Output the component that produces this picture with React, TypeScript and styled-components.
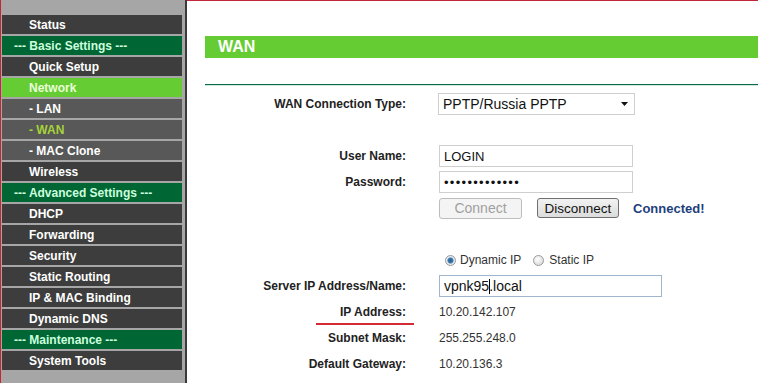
import styled, { createGlobalStyle } from 'styled-components';

const GlobalStyle = createGlobalStyle`
    html, body {
        margin: 0;
        padding: 0;
        background: #ffffff;
        font-family: 'Liberation Sans', Arial, sans-serif;
    }
    body {
        width: 758px;
        height: 383px;
        overflow: hidden;
    }
`;

const Page = styled.div`
    display: flex;
    width: 758px;
    height: 383px;
    overflow: hidden;
`;

const Sidebar = styled.nav`
    width: 180px;
    flex-shrink: 0;
    padding: 15px 3px 0 1px;
    background: #a6a6a6;
    border-left: 1px solid #c8262f;
    border-right: 2px solid #3a3a3a;
    display: flex;
    flex-direction: column;
    gap: 2px;
`;

type MenuKind = 'item' | 'sub' | 'heading' | 'active' | 'current';

const menuBg: Record<MenuKind, string> = {
    item: '#3d3d3d',
    sub: '#585858',
    heading: '#006633',
    active: '#66cc33',
    current: '#585858',
};

const menuColor: Record<MenuKind, string> = {
    item: '#ffffff',
    sub: '#ffffff',
    heading: '#ccffdd',
    active: '#eaffd8',
    current: '#a6d23a',
};

const MenuRow = styled.div<{ $kind: MenuKind }>`
    height: 19px;
    display: flex;
    align-items: center;
    padding-left: ${({ $kind }) => ($kind === 'heading' ? '12px' : '27px')};
    background: ${({ $kind }) => menuBg[$kind]};
    color: ${({ $kind }) => menuColor[$kind]};
    font-size: 12px;
    font-weight: bold;
    white-space: nowrap;
`;

const Main = styled.main`
    flex: 1;
    border-top: 1px solid #c0283a;
    padding-left: 18px;
    display: flex;
    flex-direction: column;
`;

const TitleBar = styled.div`
    margin-top: 35px;
    height: 22px;
    background: #66cc33;
    color: #ffffff;
    font-size: 16px;
    font-weight: bold;
    display: flex;
    align-items: center;
    padding-left: 13px;
`;

const Divider = styled.div`
    margin-top: 26px;
    height: 1px;
    background: #0b6a4a;
    box-shadow: 0 1px 0 #cfe8da;
`;

const Form = styled.div`
    margin-top: 6px;
    display: grid;
    grid-template-columns: 201px 1fr;
    grid-auto-rows: 26px;
    column-gap: 33px;
    align-items: center;
`;

const Label = styled.div`
    position: relative;
    text-align: right;
    font-size: 12px;
    font-weight: bold;
    color: #222222;
    height: 26px;
    line-height: 26px;
`;

const Underline = styled.span`
    position: absolute;
    left: 111px;
    bottom: 0;
    width: 98px;
    height: 2px;
    background: #d42a35;
`;

const Value = styled.div`
    font-size: 12px;
    color: #333333;
    display: flex;
    align-items: center;
`;

const TextBox = styled.div<{ $width: number; $size?: number; $focus?: boolean }>`
    box-sizing: border-box;
    width: ${({ $width }) => $width}px;
    height: 22px;
    border: 1px solid ${({ $focus }) => ($focus ? '#9fb6cc' : '#cfcfcf')};
    background: #ffffff;
    font-size: ${({ $size }) => $size ?? 14}px;
    color: #111111;
    padding-left: 4px;
    display: flex;
    align-items: center;
    white-space: nowrap;
`;

const SelectBox = styled(TextBox)`
    margin-left: -1px;
    justify-content: space-between;
    padding-right: 6px;
`;

const Dots = styled.span`
    font-size: 13px;
    letter-spacing: 1.3px;
`;

const Caret = styled.span`
    display: inline-block;
    width: 1px;
    height: 15px;
    background: #000000;
    margin-right: -1px;
`;

const Button = styled.div<{ $disabled?: boolean }>`
    box-sizing: border-box;
    height: ${({ $disabled }) => ($disabled ? 21 : 20)}px;
    width: ${({ $disabled }) => ($disabled ? 83 : 82)}px;
    border: 1px solid ${({ $disabled }) => ($disabled ? '#bdbdbd' : '#6f6f6f')};
    border-radius: 3px;
    background: ${({ $disabled }) =>
        $disabled ? '#f4f4f4' : 'linear-gradient(#f2f2f2, #dcdcdc)'};
    color: ${({ $disabled }) => ($disabled ? '#a0a0a0' : '#111111')};
    font-size: ${({ $disabled }) => ($disabled ? 14 : 13.5)}px;
    display: flex;
    align-items: center;
    justify-content: center;
`;

const ButtonRow = styled.div`
    display: flex;
    align-items: center;
    gap: 15px;
`;

const Status = styled.span`
    margin-left: -1px;
    font-size: 13px;
    font-weight: bold;
    color: #1d3f7c;
`;

const RadioGroup = styled.div`
    display: flex;
    align-items: center;
    padding-left: 6px;
    font-size: 12px;
    color: #333333;
`;

const Radio = styled.span<{ $checked?: boolean }>`
    box-sizing: border-box;
    width: 11px;
    height: 11px;
    border-radius: 50%;
    border: 1px solid #9a9a9a;
    background: ${({ $checked }) =>
        $checked
            ? 'radial-gradient(circle, #2a5d8a 0, #3b7bb0 2.5px, #dfe8ef 3.5px, #f5f5f5 100%)'
            : 'radial-gradient(circle at 40% 35%, #ffffff, #d0d0d0)'};
    margin-right: ${({ $checked }) => ($checked ? 4 : 5)}px;
`;

const RadioText = styled.span<{ $gap?: number }>`
    margin-right: ${({ $gap }) => $gap ?? 0}px;
`;

const menu: { label: string; kind: MenuKind }[] = [
    { label: 'Status', kind: 'item' },
    { label: '--- Basic Settings ---', kind: 'heading' },
    { label: 'Quick Setup', kind: 'item' },
    { label: 'Network', kind: 'active' },
    { label: '- LAN', kind: 'sub' },
    { label: '- WAN', kind: 'current' },
    { label: '- MAC Clone', kind: 'sub' },
    { label: 'Wireless', kind: 'item' },
    { label: '--- Advanced Settings ---', kind: 'heading' },
    { label: 'DHCP', kind: 'item' },
    { label: 'Forwarding', kind: 'item' },
    { label: 'Security', kind: 'item' },
    { label: 'Static Routing', kind: 'item' },
    { label: 'IP & MAC Binding', kind: 'item' },
    { label: 'Dynamic DNS', kind: 'item' },
    { label: '--- Maintenance ---', kind: 'heading' },
    { label: 'System Tools', kind: 'item' },
];

export default function App() {
    return (
        <>
            <GlobalStyle />
            <Page>
                <Sidebar>
                    {menu.map((m) => (
                        <MenuRow key={m.label} $kind={m.kind}>
                            {m.label}
                        </MenuRow>
                    ))}
                </Sidebar>
                <Main>
                    <TitleBar>WAN</TitleBar>
                    <Divider />
                    <Form>
                        <Label>WAN Connection Type:</Label>
                        <Value>
                            <SelectBox $width={197}>
                                <span>PPTP/Russia PPTP</span>
                                <svg width="7" height="4" viewBox="0 0 7 4">
                                    <path d="M0 0h7L3.5 4z" fill="#111" />
                                </svg>
                            </SelectBox>
                        </Value>

                        <Label />
                        <Value />

                        <Label>User Name:</Label>
                        <Value>
                            <TextBox $width={194} $size={13}>
                                LOGIN
                            </TextBox>
                        </Value>

                        <Label>Password:</Label>
                        <Value>
                            <TextBox $width={194}>
                                <Dots>•••••••••••••</Dots>
                            </TextBox>
                        </Value>

                        <Label />
                        <Value>
                            <ButtonRow>
                                <Button $disabled>Connect</Button>
                                <Button>Disconnect</Button>
                                <Status>Connected!</Status>
                            </ButtonRow>
                        </Value>

                        <Label />
                        <Value />

                        <Label />
                        <RadioGroup>
                            <Radio $checked />
                            <RadioText $gap={12}>Dynamic IP</RadioText>
                            <Radio />
                            <RadioText>Static IP</RadioText>
                        </RadioGroup>

                        <Label>Server IP Address/Name:</Label>
                        <Value>
                            <TextBox $width={223} $focus>
                                vpnk95
                                <Caret />
                                .local
                            </TextBox>
                        </Value>

                        <Label>
                            IP Address:
                            <Underline />
                        </Label>
                        <Value>10.20.142.107</Value>

                        <Label>Subnet Mask:</Label>
                        <Value>255.255.248.0</Value>

                        <Label>Default Gateway:</Label>
                        <Value>10.20.136.3</Value>
                    </Form>
                </Main>
            </Page>
        </>
    );
}
